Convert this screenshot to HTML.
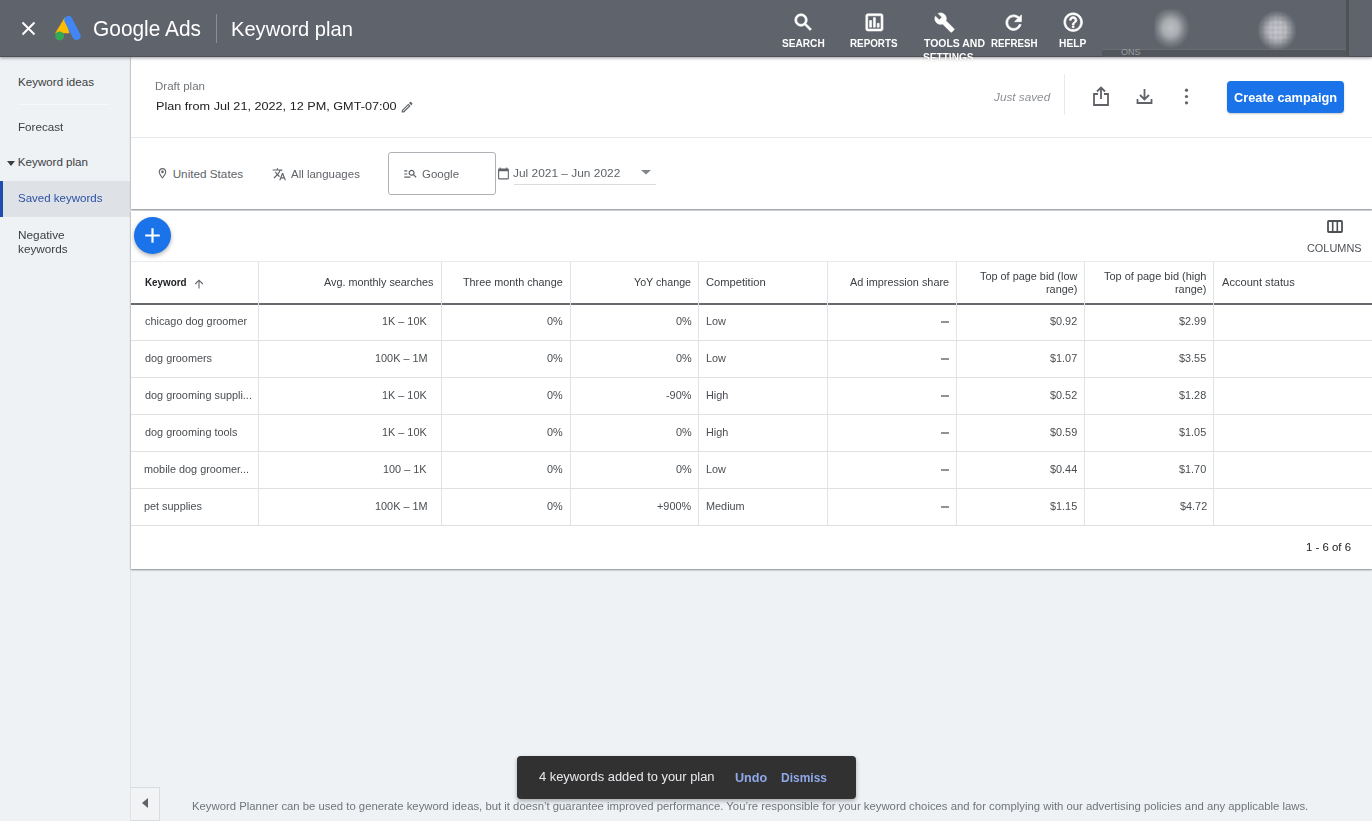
<!DOCTYPE html>
<html><head><meta charset="utf-8">
<style>
*{box-sizing:border-box;margin:0;padding:0}
html,body{width:1372px;height:821px;overflow:hidden;background:#eef2f5;font-family:"Liberation Sans",sans-serif;color:#3c4043}
.abs{position:absolute}
.tx{position:absolute;white-space:nowrap;line-height:1;transform-origin:0 0;z-index:20}
#hdr{position:absolute;left:0;top:0;width:1372px;height:57px;background:#5f636b;box-shadow:inset 0 -1px 0 rgba(0,0,0,.18),0 1px 3px rgba(0,0,0,.4);z-index:5}
#side{position:absolute;left:0;top:57px;width:131px;height:764px;background:#eef2f5;border-right:1px solid #dfe3e6}
#card1{position:absolute;left:131px;top:57px;width:1241px;height:152px;background:#fff;box-shadow:0 1px 2px rgba(60,64,67,.4),0 1px 1px rgba(60,64,67,.2)}
#card2{position:absolute;left:131px;top:211px;width:1241px;height:358px;background:#fff;box-shadow:0 1px 2px rgba(60,64,67,.4),0 1px 1px rgba(60,64,67,.2)}
.vl{position:absolute;top:51px;width:1px;height:263px;background:#e2e3e5}
.hl{position:absolute;left:0;width:1241px;height:1px;background:#e0e0e0}
</style></head><body>
<div id="hdr">
  <!-- close X -->
  <svg class="abs" style="left:21px;top:21px" width="15" height="15" viewBox="0 0 15 15"><path d="M1.5 1.5L13.5 13.5M13.5 1.5L1.5 13.5" stroke="#fff" stroke-width="2"/></svg>
  <!-- ads logo -->
  <svg class="abs" style="left:48px;top:10px" width="40" height="36" viewBox="0 0 40 36">
    <path d="M16.8 7.2L7.2 23.2L21.5 23.2Z" fill="#fbbc04"/>
    <path d="M20.4 10.1L28.5 25.8" stroke="#4285f4" stroke-width="8.2" stroke-linecap="round"/>
    <circle cx="11.6" cy="25.9" r="4.5" fill="#34a853"/>
  </svg>
  <div class="abs" style="left:216px;top:14px;width:1px;height:29px;background:#8a8e93"></div>

  <!-- nav icons -->
  <svg class="abs" style="left:792px;top:11px" width="22.80" height="22.80" viewBox="0 0 24 24"><path fill="#fff" stroke="#fff" stroke-width="0.7" d="M15.5 14h-.79l-.28-.27C15.41 12.59 16 11.11 16 9.5 16 5.91 13.09 3 9.5 3S3 5.91 3 9.5 5.91 16 9.5 16c1.61 0 3.09-.59 4.23-1.57l.27.28v.79l5 4.99L20.49 19l-4.99-5zm-6 0C7.01 14 5 11.99 5 9.5S7.01 5 9.5 5 14 7.01 14 9.5 11.99 14 9.5 14z"/></svg>
  <svg class="abs" style="left:862.8px;top:11px" width="22.80" height="22.80" viewBox="0 0 24 24"><path fill="#fff" stroke="#fff" stroke-width="0.7" d="M19 3H5c-1.1 0-2 .9-2 2v14c0 1.1.9 2 2 2h14c1.1 0 2-.9 2-2V5c0-1.1-.9-2-2-2zm0 16H5V5h14v14zM7 10h2v7H7zm4-3h2v10h-2zm4 6h2v4h-2z"/></svg>
  <svg class="abs" style="left:934.2px;top:11.8px" width="21.12" height="21.12" viewBox="0 0 24 24"><path fill="#fff" stroke="#fff" stroke-width="0.7" d="M22.7 19l-9.1-9.1c.9-2.3.4-5-1.5-6.9-2-2-5-2.4-7.4-1.3L9 6 6 9 1.6 4.7C.4 7.1.9 10.1 2.9 12.1c1.9 1.9 4.6 2.4 6.9 1.5l9.1 9.1c.4.4 1 .4 1.4 0l2.3-2.3c.5-.4.5-1.1.1-1.4z"/></svg>
  <svg class="abs" style="left:1001.6px;top:10.5px" width="23.28" height="23.28" viewBox="0 0 24 24"><path fill="#fff" stroke="#fff" stroke-width="0.7" d="M17.65 6.35C16.2 4.9 14.21 4 12 4c-4.42 0-7.99 3.58-7.99 8s3.57 8 7.99 8c3.73 0 6.84-2.55 7.73-6h-2.08c-.82 2.33-3.04 4-5.65 4-3.31 0-6-2.69-6-6s2.69-6 6-6c1.66 0 3.14.69 4.22 1.78L13 11h7V4l-2.35 2.35z"/></svg>
  <svg class="abs" style="left:1062px;top:11.3px" width="22.32" height="22.32" viewBox="0 0 24 24"><path fill="#fff" stroke="#fff" stroke-width="0.7" d="M11 18h2v-2h-2v2zm1-16C6.48 2 2 6.48 2 12s4.48 10 10 10 10-4.48 10-10S17.52 2 12 2zm0 18c-4.41 0-8-3.59-8-8s3.59-8 8-8 8 3.59 8 8-3.59 8-8 8zm0-14c-2.21 0-4 1.79-4 4h2c0-1.1.9-2 2-2s2 .9 2 2c0 2-3 1.75-3 5h2c0-2.25 3-2.5 3-5 0-2.21-1.79-4-4-4z"/></svg>

  <!-- blurred account area -->
  <div class="abs" style="left:1102px;top:49px;width:244px;height:8px;background:#53565c;border-top:1px solid #686c73"></div>
  <div class="abs" style="left:1121px;top:48px;font-size:9px;color:#9a9ea3;line-height:1">ONS</div>
  <div class="abs" style="left:1346px;top:0;width:3px;height:57px;background:#4e5257"></div>
  <div class="abs" style="left:1154px;top:9px;width:40px;height:42px;background:#bcbfc2;-webkit-mask-image:radial-gradient(ellipse 48% 50% at 42% 45%, #000 0%, rgba(0,0,0,.8) 40%, rgba(0,0,0,.3) 72%, rgba(0,0,0,0) 100%);filter:blur(1.5px)"></div>
  <div class="abs" style="left:1257px;top:10px;width:40px;height:41px;background:repeating-linear-gradient(0deg, rgba(130,132,140,.3) 0 2px, rgba(0,0,0,0) 2px 5px),repeating-linear-gradient(90deg, rgba(130,132,140,.3) 0 2px, rgba(0,0,0,0) 2px 5px),#d3d4d9;-webkit-mask-image:radial-gradient(ellipse 50% 50% at 50% 50%, #000 0%, rgba(0,0,0,.85) 45%, rgba(0,0,0,.3) 78%, rgba(0,0,0,0) 100%);filter:blur(1.2px)"></div>
</div>

<div id="side">
  <div class="abs" style="left:18px;top:47px;width:92px;height:1px;background:#f6f8fa"></div>
  <svg class="abs" style="left:7px;top:104px" width="8" height="5" viewBox="0 0 8 5"><path d="M0 0H8L4 5Z" fill="#3c4043"/></svg>
  <div class="abs" style="left:0;top:124px;width:130px;height:36px;background:#dee1e5"></div>
  <div class="abs" style="left:0;top:124px;width:3px;height:36px;background:#1d4ead"></div>
</div>

<div id="card1">
  <svg class="abs" style="left:269.22px;top:42.92px" width="14.27" height="14.27" viewBox="0 0 24 24"><path fill="#5f6368"  d="M14.06 9.02l.92.92L5.92 19H5v-.92l9.06-9.06M17.66 3c-.25 0-.51.1-.7.29l-1.83 1.83 3.75 3.75 1.83-1.83c.39-.39.39-1.02 0-1.41l-2.34-2.34c-.2-.2-.45-.29-.71-.29zm-3.6 3.19L3 17.25V21h3.75L17.81 9.94l-3.75-3.75z"/></svg>
  <div class="abs" style="left:933px;top:17px;width:1px;height:41px;background:#e8eaed"></div>
  <!-- share -->
  <svg class="abs" style="left:961px;top:29px" width="18" height="21" viewBox="0 0 18 21"><path d="M6 8H2V19H16V8H12" fill="none" stroke="#5f6368" stroke-width="1.8"/><path d="M9 13V2M5 5.5L9 1.5L13 5.5" fill="none" stroke="#5f6368" stroke-width="1.8"/></svg>
  <!-- download -->
  <svg class="abs" style="left:1005px;top:31px" width="17" height="17" viewBox="0 0 17 17"><path d="M8.5 1V11M4 7L8.5 11.5L13 7" fill="none" stroke="#5f6368" stroke-width="1.8"/><path d="M1.5 11V15H15.5V11" fill="none" stroke="#5f6368" stroke-width="1.8"/></svg>
  <!-- kebab -->
  <svg class="abs" style="left:1052px;top:31px" width="7" height="17" viewBox="0 0 7 17"><circle cx="3.5" cy="2.2" r="1.6" fill="#5f6368"/><circle cx="3.5" cy="8.5" r="1.6" fill="#5f6368"/><circle cx="3.5" cy="14.8" r="1.6" fill="#5f6368"/></svg>
  <div class="abs" style="left:1096px;top:24px;width:117px;height:32px;background:#1a73e8;border-radius:4px;box-shadow:0 1px 2px rgba(60,64,67,.3)"></div>

  <div class="abs" style="left:0;top:80px;width:1241px;height:1px;background:#e8eaed"></div>
  <!-- filter row -->
  <svg class="abs" style="left:25.10px;top:109.92px" width="12.96" height="12.96" viewBox="0 0 24 24"><path fill="#5f6368"  d="M12 2C8.13 2 5 5.13 5 9c0 5.25 7 13 7 13s7-7.75 7-13c0-3.87-3.13-7-7-7zM7 9c0-2.76 2.24-5 5-5s5 2.24 5 5c0 2.88-2.88 7.19-5 9.88C9.92 16.21 7 11.85 7 9z M12 11.5a2.5 2.5 0 1 0 0-5 2.5 2.5 0 0 0 0 5z"/></svg>
  <svg class="abs" style="left:141.10px;top:109.79px" width="14.51" height="14.51" viewBox="0 0 24 24"><path fill="#5f6368"  d="M12.87 15.07l-2.54-2.51.03-.03c1.74-1.94 2.98-4.17 3.71-6.53H17V4h-7V2H8v2H1v1.99h11.17C11.5 7.92 10.44 9.75 9 11.35 8.07 10.32 7.3 9.19 6.69 8h-2c.73 1.63 1.73 3.17 2.98 4.56l-5.09 5.02L4 19l5-5 3.11 3.11.76-2.04zM18.5 10h-2L12 22h2l1.12-3h4.75L21 22h2l-4.5-12zm-2.62 7l1.62-4.33L19.12 17h-3.24z"/></svg>
  <div class="abs" style="left:257px;top:95px;width:108px;height:43px;border:1px solid #aeb2b6;border-radius:3px"></div>
  <svg class="abs" style="left:272.47px;top:109.09px" width="14.76" height="14.76" viewBox="0 0 24 24"><path fill="#5f6368"  d="M7 9H2V7h5v2zm0 3H2v2h5v-2zm13.59 7l-3.83-3.83c-.8.52-1.74.83-2.76.83-2.76 0-5-2.24-5-5s2.24-5 5-5 5 2.24 5 5c0 1.02-.31 1.96-.83 2.75L22 17.59 20.59 19zM17 11c0-1.65-1.35-3-3-3s-3 1.35-3 3 1.35 3 3 3 3-1.35 3-3zM2 19h10v-2H2v2z"/></svg>
  <svg class="abs" style="left:365.52px;top:109.96px" width="12.96" height="12.96" viewBox="0 0 24 24"><path fill="#5f6368"  d="M20 3h-1V1h-2v2H7V1H5v2H4c-1.1 0-2 .9-2 2v16c0 1.1.9 2 2 2h16c1.1 0 2-.9 2-2V5c0-1.1-.9-2-2-2zm0 18H4V8h16v13z"/></svg>
  <svg class="abs" style="left:510px;top:113px" width="10" height="5" viewBox="0 0 10 5"><path d="M0 0H10L5 4.5Z" fill="#80868b"/></svg>
  <div class="abs" style="left:383px;top:127px;width:142px;height:1px;background:#dadce0"></div>
</div>

<div id="card2">
  <!-- FAB -->
  <div class="abs" style="left:3px;top:5.5px;width:37px;height:37px;border-radius:50%;background:#1a73e8;box-shadow:0 2px 4px rgba(0,0,0,.3)"></div>
  <svg class="abs" style="left:12px;top:14.5px" width="19" height="19" viewBox="0 0 19 19"><path d="M9.5 2.2V16.8M2.2 9.5H16.8" stroke="#fff" stroke-width="2.2"/></svg>
  <!-- columns -->
  <svg class="abs" style="left:1196px;top:9px" width="16" height="13" viewBox="0 0 16 13"><rect x="1" y="1" width="14" height="11" rx="0.8" fill="none" stroke="#4d5156" stroke-width="1.8"/><path d="M5.7 1V12M10.3 1V12" stroke="#4d5156" stroke-width="1.6"/></svg>

  <div class="hl" style="top:50px;background:#e8eaed"></div>
  <div class="hl" style="top:92px;height:1.7px;background:#666a6e"></div>
  <div class="hl" style="top:129px"></div>
  <div class="hl" style="top:166px"></div>
  <div class="hl" style="top:203px"></div>
  <div class="hl" style="top:240px"></div>
  <div class="hl" style="top:277px"></div>
  <div class="hl" style="top:314px"></div>

  <div class="vl" style="left:127px"></div>
  <div class="vl" style="left:310px"></div>
  <div class="vl" style="left:439px"></div>
  <div class="vl" style="left:567px"></div>
  <div class="vl" style="left:696px"></div>
  <div class="vl" style="left:825px"></div>
  <div class="vl" style="left:953px"></div>
  <div class="vl" style="left:1082px"></div>

  <svg class="abs" style="left:62.5px;top:67.5px" width="10" height="10" viewBox="0 0 10 10"><path d="M5 9.5V1.2M1.2 5L5 1.2L8.8 5" fill="none" stroke="#5f6368" stroke-width="1.1"/></svg>
</div>

<!-- snackbar -->
<div class="abs" style="left:517px;top:756px;width:339px;height:43px;background:#313131;border-radius:4px;box-shadow:0 2px 4px rgba(0,0,0,.3);z-index:10"></div>

<!-- collapse btn -->
<div class="abs" style="left:131px;top:787px;width:29px;height:34px;background:#f1f3f4;border:1px solid #dadce0;border-left:none"></div>
<svg class="abs" style="left:142px;top:798px" width="6" height="10" viewBox="0 0 6 10"><path d="M6 0V10L0 5Z" fill="#5f6368"/></svg>
<div class="tx" id="t0" style="left:92.70px;top:18.61px;font-size:21.24px;color:#fff;transform:scaleX(0.9841)">Google Ads</div>
<div class="tx" id="t1" style="left:231.19px;top:18.50px;font-size:20.69px;color:#fff;transform:scaleX(0.9724)">Keyword plan</div>
<div class="tx" id="t2" style="left:782.15px;top:38.68px;font-size:10.00px;color:#fff;transform:scaleX(1.0109);font-weight:bold">SEARCH</div>
<div class="tx" id="t3" style="left:850.31px;top:38.68px;font-size:10.00px;color:#fff;transform:scaleX(0.9831);font-weight:bold">REPORTS</div>
<div class="tx" id="t4" style="left:923.90px;top:38.68px;font-size:10.00px;color:#fff;transform:scaleX(1.0450);font-weight:bold">TOOLS AND</div>
<div class="tx" id="t5" style="left:990.87px;top:38.68px;font-size:10.00px;color:#fff;transform:scaleX(0.9731);font-weight:bold">REFRESH</div>
<div class="tx" id="t6" style="left:1059.28px;top:39.29px;font-size:10.14px;color:#fff;transform:scaleX(1.0087);font-weight:bold">HELP</div>
<div class="tx" id="t7" style="left:923.30px;top:53.35px;font-size:10.29px;color:#fff;transform:scaleX(0.9831);font-weight:bold;text-shadow:0 0 1px rgba(0,0,0,.35)">SETTINGS</div>
<div class="tx" id="t8" style="left:17.97px;top:76.03px;font-size:11.60px;color:#3c4043">Keyword ideas</div>
<div class="tx" id="t9" style="left:17.92px;top:120.65px;font-size:11.60px;color:#3c4043;transform:scaleX(1.0050)">Forecast</div>
<div class="tx" id="t10" style="left:17.77px;top:155.82px;font-size:11.60px;color:#3c4043">Keyword plan</div>
<div class="tx" id="t11" style="left:18.18px;top:192.03px;font-size:11.60px;color:#2c52a6;transform:scaleX(0.9934)">Saved keywords</div>
<div class="tx" id="t12" style="left:17.85px;top:228.82px;font-size:11.60px;color:#3c4043;transform:scaleX(1.0200)">Negative</div>
<div class="tx" id="t13" style="left:17.69px;top:243.32px;font-size:11.60px;color:#3c4043;transform:scaleX(1.0136)">keywords</div>
<div class="tx" id="t14" style="left:154.98px;top:81.60px;font-size:10.07px;color:#70757a;transform:scaleX(1.1448)">Draft plan</div>
<div class="tx" id="t15" style="left:156.09px;top:99.82px;font-size:11.72px;color:#202124;transform:scaleX(1.0798)">Plan from Jul 21, 2022, 12 PM, GMT-07:00</div>
<div class="tx" id="t16" style="left:993.70px;top:92.29px;font-size:11.31px;color:#8d9196;transform:scaleX(1.0404);font-style:italic">Just saved</div>
<div class="tx" id="t17" style="left:1234.14px;top:92.00px;font-size:12.41px;color:#fff;transform:scaleX(1.0312);font-weight:bold">Create campaign</div>
<div class="tx" id="t18" style="left:172.67px;top:167.50px;font-size:11.72px;color:#5f6368">United States</div>
<div class="tx" id="t19" style="left:290.70px;top:168.02px;font-size:11.72px;color:#5f6368;transform:scaleX(0.9787)">All languages</div>
<div class="tx" id="t20" style="left:422.02px;top:167.92px;font-size:11.72px;color:#5f6368;transform:scaleX(0.9810)">Google</div>
<div class="tx" id="t21" style="left:513.07px;top:167.20px;font-size:11.72px;color:#5f6368;transform:scaleX(1.0161)">Jul 2021 – Jun 2022</div>
<div class="tx" id="t22" style="left:1307.40px;top:242.96px;font-size:11.29px;color:#4d5156;transform:scaleX(0.9665)">COLUMNS</div>
<div class="tx" id="t23" style="left:145.26px;top:276.92px;font-size:11.50px;color:#202124;transform:scaleX(0.8547);font-weight:bold">Keyword</div>
<div class="tx" id="t24" style="left:324.20px;top:276.92px;font-size:11.50px;color:#3c4043;transform:scaleX(0.9417)">Avg. monthly searches</div>
<div class="tx" id="t25" style="left:463.33px;top:276.92px;font-size:11.50px;color:#3c4043;transform:scaleX(0.9389)">Three month change</div>
<div class="tx" id="t26" style="left:633.98px;top:276.92px;font-size:11.50px;color:#3c4043;transform:scaleX(0.9290)">YoY change</div>
<div class="tx" id="t27" style="left:706.04px;top:276.92px;font-size:11.50px;color:#3c4043;transform:scaleX(0.9712)">Competition</div>
<div class="tx" id="t28" style="left:849.70px;top:276.92px;font-size:11.50px;color:#3c4043;transform:scaleX(0.9453)">Ad impression share</div>
<div class="tx" id="t29" style="left:979.87px;top:270.57px;font-size:11.50px;color:#3c4043;transform:scaleX(0.9452)">Top of page bid (low</div>
<div class="tx" id="t30" style="left:1045.75px;top:283.92px;font-size:11.50px;color:#3c4043;transform:scaleX(0.9452)">range)</div>
<div class="tx" id="t31" style="left:1104.33px;top:270.57px;font-size:11.50px;color:#3c4043;transform:scaleX(0.9537)">Top of page bid (high</div>
<div class="tx" id="t32" style="left:1175.15px;top:283.92px;font-size:11.50px;color:#3c4043;transform:scaleX(0.9452)">range)</div>
<div class="tx" id="t33" style="left:1222.10px;top:277.12px;font-size:11.50px;color:#3c4043;transform:scaleX(0.9635)">Account status</div>
<div class="tx" id="t34" style="left:144.57px;top:315.23px;font-size:11.60px;color:#4a4e52;transform:scaleX(0.9371)">chicago dog groomer</div>
<div class="tx" id="t35" style="left:381.91px;top:315.17px;font-size:11.60px;color:#4a4e52;transform:scaleX(0.9371)">1K – 10K</div>
<div class="tx" id="t36" style="left:546.89px;top:315.17px;font-size:11.60px;color:#4a4e52;transform:scaleX(0.9371)">0%</div>
<div class="tx" id="t37" style="left:675.84px;top:315.17px;font-size:11.60px;color:#4a4e52;transform:scaleX(0.9371)">0%</div>
<div class="tx" id="t38" style="left:705.85px;top:315.15px;font-size:11.60px;color:#4a4e52;transform:scaleX(0.9371)">Low</div>
<div class="tx" id="t39" style="left:1050.38px;top:314.62px;font-size:11.60px;color:#4a4e52;transform:scaleX(0.9371)">$0.92</div>
<div class="tx" id="t40" style="left:1179.35px;top:314.62px;font-size:11.60px;color:#4a4e52;transform:scaleX(0.9371)">$2.99</div>
<div class="tx" id="t41" style="left:145.05px;top:352.23px;font-size:11.60px;color:#4a4e52;transform:scaleX(0.9371)">dog groomers</div>
<div class="tx" id="t42" style="left:375.07px;top:352.17px;font-size:11.60px;color:#4a4e52;transform:scaleX(0.9371)">100K – 1M</div>
<div class="tx" id="t43" style="left:546.89px;top:352.17px;font-size:11.60px;color:#4a4e52;transform:scaleX(0.9371)">0%</div>
<div class="tx" id="t44" style="left:675.84px;top:352.17px;font-size:11.60px;color:#4a4e52;transform:scaleX(0.9371)">0%</div>
<div class="tx" id="t45" style="left:705.85px;top:352.15px;font-size:11.60px;color:#4a4e52;transform:scaleX(0.9371)">Low</div>
<div class="tx" id="t46" style="left:1050.38px;top:351.62px;font-size:11.60px;color:#4a4e52;transform:scaleX(0.9371)">$1.07</div>
<div class="tx" id="t47" style="left:1179.21px;top:351.62px;font-size:11.60px;color:#4a4e52;transform:scaleX(0.9371)">$3.55</div>
<div class="tx" id="t48" style="left:144.61px;top:389.23px;font-size:11.60px;color:#4a4e52;transform:scaleX(0.9371)">dog grooming suppli...</div>
<div class="tx" id="t49" style="left:381.91px;top:389.17px;font-size:11.60px;color:#4a4e52;transform:scaleX(0.9371)">1K – 10K</div>
<div class="tx" id="t50" style="left:546.89px;top:389.17px;font-size:11.60px;color:#4a4e52;transform:scaleX(0.9371)">0%</div>
<div class="tx" id="t51" style="left:665.93px;top:389.17px;font-size:11.60px;color:#4a4e52;transform:scaleX(0.9371)">-90%</div>
<div class="tx" id="t52" style="left:706.17px;top:389.23px;font-size:11.60px;color:#4a4e52;transform:scaleX(0.9371)">High</div>
<div class="tx" id="t53" style="left:1050.38px;top:388.62px;font-size:11.60px;color:#4a4e52;transform:scaleX(0.9371)">$0.52</div>
<div class="tx" id="t54" style="left:1179.21px;top:388.62px;font-size:11.60px;color:#4a4e52;transform:scaleX(0.9371)">$1.28</div>
<div class="tx" id="t55" style="left:144.82px;top:426.23px;font-size:11.60px;color:#4a4e52;transform:scaleX(0.9371)">dog grooming tools</div>
<div class="tx" id="t56" style="left:381.91px;top:426.17px;font-size:11.60px;color:#4a4e52;transform:scaleX(0.9371)">1K – 10K</div>
<div class="tx" id="t57" style="left:546.89px;top:426.17px;font-size:11.60px;color:#4a4e52;transform:scaleX(0.9371)">0%</div>
<div class="tx" id="t58" style="left:675.84px;top:426.17px;font-size:11.60px;color:#4a4e52;transform:scaleX(0.9371)">0%</div>
<div class="tx" id="t59" style="left:706.17px;top:426.23px;font-size:11.60px;color:#4a4e52;transform:scaleX(0.9371)">High</div>
<div class="tx" id="t60" style="left:1050.25px;top:425.62px;font-size:11.60px;color:#4a4e52;transform:scaleX(0.9371)">$0.59</div>
<div class="tx" id="t61" style="left:1179.21px;top:425.62px;font-size:11.60px;color:#4a4e52;transform:scaleX(0.9371)">$1.05</div>
<div class="tx" id="t62" style="left:143.95px;top:463.23px;font-size:11.60px;color:#4a4e52;transform:scaleX(0.9371)">mobile dog groomer...</div>
<div class="tx" id="t63" style="left:383.49px;top:463.17px;font-size:11.60px;color:#4a4e52;transform:scaleX(0.9371)">100 – 1K</div>
<div class="tx" id="t64" style="left:546.89px;top:463.17px;font-size:11.60px;color:#4a4e52;transform:scaleX(0.9371)">0%</div>
<div class="tx" id="t65" style="left:675.84px;top:463.17px;font-size:11.60px;color:#4a4e52;transform:scaleX(0.9371)">0%</div>
<div class="tx" id="t66" style="left:705.85px;top:463.15px;font-size:11.60px;color:#4a4e52;transform:scaleX(0.9371)">Low</div>
<div class="tx" id="t67" style="left:1049.67px;top:462.62px;font-size:11.60px;color:#4a4e52;transform:scaleX(0.9371)">$0.44</div>
<div class="tx" id="t68" style="left:1179.08px;top:462.62px;font-size:11.60px;color:#4a4e52;transform:scaleX(0.9371)">$1.70</div>
<div class="tx" id="t69" style="left:144.25px;top:500.23px;font-size:11.60px;color:#4a4e52;transform:scaleX(0.9371)">pet supplies</div>
<div class="tx" id="t70" style="left:375.07px;top:500.17px;font-size:11.60px;color:#4a4e52;transform:scaleX(0.9371)">100K – 1M</div>
<div class="tx" id="t71" style="left:546.89px;top:500.17px;font-size:11.60px;color:#4a4e52;transform:scaleX(0.9371)">0%</div>
<div class="tx" id="t72" style="left:656.97px;top:500.17px;font-size:11.60px;color:#4a4e52;transform:scaleX(0.9371)">+900%</div>
<div class="tx" id="t73" style="left:706.21px;top:500.34px;font-size:11.60px;color:#4a4e52;transform:scaleX(0.9371)">Medium</div>
<div class="tx" id="t74" style="left:1050.31px;top:499.62px;font-size:11.60px;color:#4a4e52;transform:scaleX(0.9371)">$1.15</div>
<div class="tx" id="t75" style="left:1179.78px;top:499.62px;font-size:11.60px;color:#4a4e52;transform:scaleX(0.9371)">$4.72</div>
<div class="tx" id="t76" style="left:1305.74px;top:540.80px;font-size:11.72px;color:#202124;transform:scaleX(0.9732)">1 - 6 of 6</div>
<div class="tx" id="t77" style="left:538.69px;top:771.20px;font-size:12.41px;color:#e8eaed;transform:scaleX(1.0386)">4 keywords added to your plan</div>
<div class="tx" id="t78" style="left:734.84px;top:772.10px;font-size:12.14px;color:#8fa8ea;transform:scaleX(1.0403);font-weight:bold">Undo</div>
<div class="tx" id="t79" style="left:780.92px;top:772.10px;font-size:12.14px;color:#8fa8ea;transform:scaleX(0.9895);font-weight:bold">Dismiss</div>
<div class="tx" id="t80" style="left:191.99px;top:800.64px;font-size:10.76px;color:#70757a;transform:scaleX(1.0536)">Keyword Planner can be used to generate keyword ideas, but it doesn’t guarantee improved performance. You’re responsible for your keyword choices and for complying with our advertising policies and any applicable laws.</div>
<div class="abs" style="left:941px;top:321.0px;width:8px;height:1.5px;background:#8f9397;z-index:20"></div>
<div class="abs" style="left:941px;top:358.0px;width:8px;height:1.5px;background:#8f9397;z-index:20"></div>
<div class="abs" style="left:941px;top:395.0px;width:8px;height:1.5px;background:#8f9397;z-index:20"></div>
<div class="abs" style="left:941px;top:432.0px;width:8px;height:1.5px;background:#8f9397;z-index:20"></div>
<div class="abs" style="left:941px;top:469.0px;width:8px;height:1.5px;background:#8f9397;z-index:20"></div>
<div class="abs" style="left:941px;top:506.0px;width:8px;height:1.5px;background:#8f9397;z-index:20"></div>
</body></html>
